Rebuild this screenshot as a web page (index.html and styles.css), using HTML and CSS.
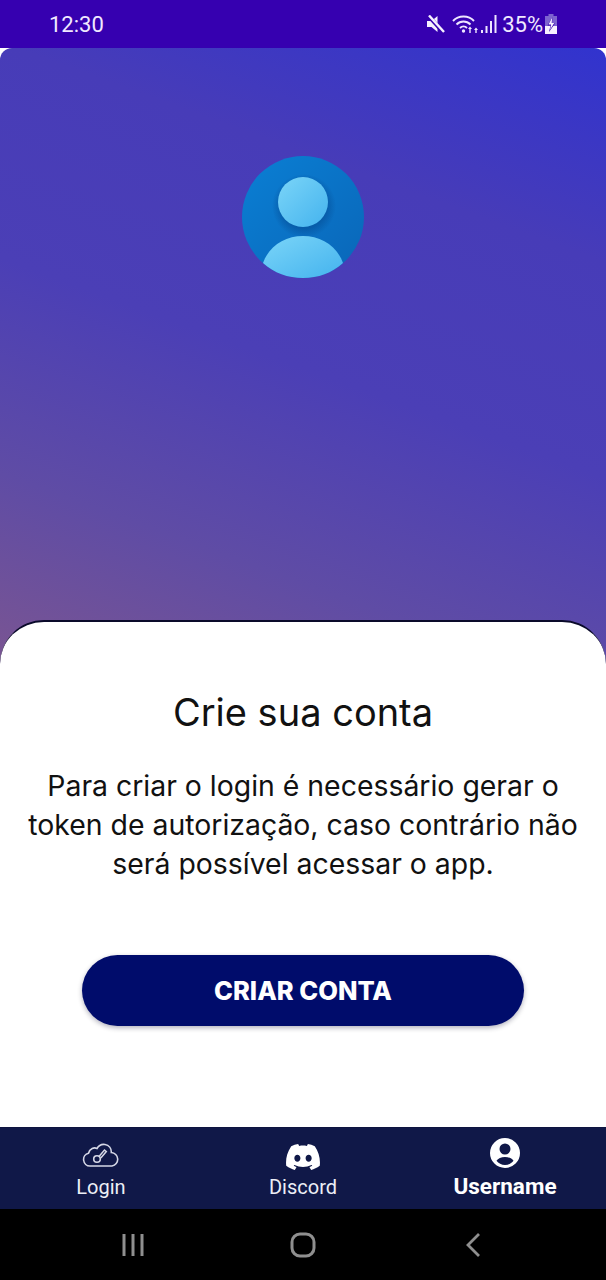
FILE: index.html
```html
<!DOCTYPE html>
<html lang="pt-BR">
<head>
<meta charset="utf-8">
<title>Crie sua conta</title>
<link rel="stylesheet" href="styles.css">
</head>
<body>
<div class="screen">
  <header class="status">
    <span class="clock">12:30</span>
    <div class="status-icons">
      <svg class="i-mute" viewBox="0 0 18 18"><path d="M0 6h4.500L10.500 1v16l-6-5H0z" fill="#f6f0ff"/><path d="M1 0.500l15.500 17" stroke="#3600b0" stroke-width="4"/><path d="M2 0.500l15 16.500" stroke="#f6f0ff" stroke-width="2.400"/></svg>
      <svg class="i-wifi" viewBox="0 0 28 20"><g fill="none" stroke="#eee6ff" stroke-width="1.900"><path d="M1 7C6.500 1 16.500 1 22 7"/><path d="M4.500 10.500c4-4 10-4 14 0"/><path d="M8 14c2-2 5-2 7 0"/></g><circle cx="11.500" cy="17" r="1.700" fill="#eee6ff"/><path d="M16 15l2-2.500 2 2.500h-1.300v4h-1.400v-4zM22 16l2-2.500 2 2.500h-1.300v3h-1.400v-3z" fill="#eee6ff"/></svg>
      <svg class="i-signal" viewBox="0 0 17 20"><path d="M1 16h2v3H1zM5.500 12h2v7h-2zM10 7h2v12h-2zM14.500 1h2v18h-2z" fill="#eee6ff"/></svg>
      <span class="pct">35%</span>
      <svg class="i-batt" viewBox="0 0 14 20"><path d="M4.500 0h5v2H13v18H1V2h3.500z" fill="#7d63cf"/><path d="M1 12h12v8H1z" fill="#f6f0ff"/><path d="M8.500 3L3.500 11.500h3L5 18l6-8.500H8z" fill="#3600b0"/><path d="M8.200 3.500L4.500 10.500h2.600L6 16l4.200-7H7.700z" fill="#f6f0ff"/></svg>
    </div>
  </header>

  <main class="main">
    <section class="hero">
      <svg class="avatar" viewBox="0 0 122 122">
        <defs>
          <linearGradient id="av-bg" x1="0" y1="0" x2="1" y2="1"><stop offset="0" stop-color="#0a7fd4"/><stop offset="1" stop-color="#0a66b8"/></linearGradient>
          <linearGradient id="av-fg" x1="0" y1="0" x2="1" y2="1"><stop offset="0" stop-color="#7bd5f8"/><stop offset="1" stop-color="#44b3ee"/></linearGradient>
          <radialGradient id="av-sh"><stop offset="0.7" stop-color="#04488f" stop-opacity=".5"/><stop offset="1" stop-color="#04488f" stop-opacity="0"/></radialGradient>
        </defs>
        <circle cx="61" cy="61" r="61" fill="url(#av-bg)"/>
        <circle cx="62" cy="50" r="32" fill="url(#av-sh)"/>
        <circle cx="61" cy="46" r="25" fill="url(#av-fg)"/>
        <path d="M21 107C27 90 43 80 61 80s34 10 40 27C90 117 76 122 61 122S32 117 21 107z" fill="url(#av-fg)"/>
      </svg>
    </section>
    <section class="sheet">
      <h1 class="title">Crie sua conta</h1>
      <p class="text">Para criar o login é necessário gerar o token de autorização, caso contrário não será possível acessar o app.</p>
      <button class="cta">CRIAR CONTA</button>
    </section>
  </main>

  <nav class="tabs">
    <div class="tab">
      <svg class="i-cloud" viewBox="0 0 38 24"><path d="M10 23H8a6.500 6.500 0 0 1-1.500-12.800C8 5.500 12 4 15 5.500 17 2 20 1 23 1.500c4 .7 6.500 4 6.300 8A6.800 6.800 0 0 1 30 23z" fill="none" stroke="#d5d7e6" stroke-width="1.600"/><circle cx="15" cy="16" r="3.300" fill="none" stroke="#d5d7e6" stroke-width="1.600"/><path d="M17 13.500L22.500 7l1.800 1.500-5.500 6.500" fill="none" stroke="#d5d7e6" stroke-width="1.500"/></svg>
      <span class="tab-label">Login</span>
    </div>
    <div class="tab">
      <svg class="i-discord" viewBox="0 2.800 24 18.400"><path d="M20.317 4.370a19.790 19.790 0 0 0-4.885-1.515.074.074 0 0 0-.079.037c-.210.375-.444.865-.608 1.250-1.845-.276-3.680-.276-5.487 0-.164-.393-.406-.874-.618-1.250a.077.077 0 0 0-.079-.037 19.740 19.740 0 0 0-4.885 1.515.070.070 0 0 0-.032.028C.533 9.046-.319 13.580.099 18.058a.082.082 0 0 0 .031.056c2.053 1.508 4.041 2.423 5.993 3.029a.078.078 0 0 0 .084-.028c.462-.630.873-1.295 1.226-1.994a.076.076 0 0 0-.042-.106c-.653-.248-1.274-.550-1.872-.892a.077.077 0 0 1-.008-.128c.126-.094.252-.192.372-.291a.074.074 0 0 1 .078-.011c3.928 1.793 8.180 1.793 12.061 0a.074.074 0 0 1 .079.010c.120.099.246.198.373.292a.077.077 0 0 1-.007.128 12.300 12.300 0 0 1-1.873.891.077.077 0 0 0-.041.107c.360.698.772 1.363 1.225 1.993a.076.076 0 0 0 .084.029c1.961-.607 3.950-1.522 6.002-3.029a.077.077 0 0 0 .031-.055c.500-5.177-.838-9.674-3.548-13.660a.061.061 0 0 0-.031-.029zM8.020 15.331c-1.183 0-2.157-1.086-2.157-2.419 0-1.333.956-2.419 2.157-2.419 1.211 0 2.176 1.095 2.157 2.419 0 1.333-.956 2.419-2.157 2.419zm7.975 0c-1.183 0-2.157-1.086-2.157-2.419 0-1.333.955-2.419 2.157-2.419 1.211 0 2.176 1.095 2.157 2.419 0 1.333-.946 2.419-2.157 2.419z" fill="#fff"/></svg>
      <span class="tab-label">Discord</span>
    </div>
    <div class="tab tab-active">
      <svg class="i-user" viewBox="0 0 30 30"><path fill-rule="evenodd" d="M15 0a15 15 0 1 1 0 30a15 15 0 0 1 0-30zM15 5.500a5.500 5.500 0 1 0 0 11a5.500 5.500 0 0 0 0-11zM15 19c-3.800 0-7 1.500-8.500 3.800C8.500 25.300 11.500 27 15 27s6.500-1.700 8.500-4.200C22 20.500 18.800 19 15 19z" fill="#fff"/></svg>
      <span class="tab-label">Username</span>
    </div>
  </nav>

  <footer class="sysnav">
    <svg class="i-recent" viewBox="0 0 24 24"><path d="M3 1v22M12 1v22M21 1v22" stroke="#8f8f8f" stroke-width="3" fill="none"/></svg>
    <svg class="i-home" viewBox="0 0 26 26"><rect x="2" y="2" width="22" height="22" rx="8" stroke="#8f8f8f" stroke-width="3" fill="none"/></svg>
    <svg class="i-back" viewBox="0 0 16 26"><path d="M14 2L3 13l11 11" stroke="#8f8f8f" stroke-width="2.800" fill="none"/></svg>
  </footer>
</div>
</body>
</html>
```

FILE: styles.css
```css
* { box-sizing: border-box; }
html, body { margin: 0; padding: 0; }
body { background: #fff; font-family: "Inter", "Liberation Sans", sans-serif; }
.screen { width: 606px; height: 1280px; display: flex; flex-direction: column; overflow: hidden; }

.status { flex: 0 0 48px; background: #3600b0; color: #f0e9ff; display: flex; align-items: center; justify-content: space-between; padding: 0 48px 0 49px; font-family: "Roboto", sans-serif; }
.clock { font-size: 22px; }
.status-icons { display: flex; align-items: center; }
.i-mute { width: 18px; height: 18px; margin-right: 7px; margin-left: -1px; }
.i-wifi { width: 28px; height: 20px; }
.i-signal { width: 17px; height: 20px; margin-right: 5px; }
.pct { font-size: 22px; margin-right: 1px; }
.i-batt { width: 14px; height: 20px; }

.main { flex: 1; display: flex; flex-direction: column; background: #7d5690 linear-gradient(200deg, #3133ce 0%, #473cb8 25%, #4b3fb6 50%, #5f4ca5 75%, #7d5690 100%) no-repeat; background-size: 100% 640px; border-radius: 12px 12px 0 0; }
.hero { flex: 0 0 572px; padding-top: 108px; display: flex; justify-content: center; align-items: flex-start; }
.avatar { width: 122px; height: 122px; margin-left: -1px; }

.sheet { flex: 1; background: #fff; border-top: 2px solid #0a0a2a; border-radius: 44px 44px 0 0; display: flex; flex-direction: column; align-items: center; color: #111; }
.title { margin: 65px 0 0; font-size: 38px; line-height: 50px; font-weight: 400; }
.text { margin: 29px 0 0; width: 570px; font-size: 28.400px; line-height: 39px; text-align: center; }
.cta { margin-top: 72px; width: 442px; height: 71px; border: 0; border-radius: 36px; background: #000c6b; color: #fff; font-family: inherit; font-weight: 800; font-size: 25.500px; box-shadow: 0 2px 5px rgba(0,0,40,.3); }

.tabs { flex: 0 0 82px; background: #101848; border-top: 1px solid #0e1440; display: grid; grid-template-columns: repeat(3, 1fr); color: #fff; font-family: "Roboto", sans-serif; }
.tab { display: flex; flex-direction: column; align-items: center; justify-content: flex-end; padding-bottom: 10px; }
.tab-active { padding-bottom: 11px; }
.tab-label { font-size: 20px; line-height: 24px; color: #eceef6; margin-top: 6px; }
.tab-active .tab-label { font-size: 22.500px; font-weight: 700; color: #fff; margin-top: 6px; }
.i-cloud { width: 38px; height: 24px; margin-bottom: 2px; }
.i-discord { width: 34px; height: 26px; margin-bottom: -1px; }
.i-user { width: 30px; height: 30px; }

.sysnav { flex: 0 0 71px; background: #000; display: flex; justify-content: center; align-items: center; padding: 0 4px 0 0; }
.sysnav svg { display: block; }
.i-recent { width: 24px; height: 24px; margin-right: 145px; }
.i-home { width: 26px; height: 26px; margin-right: 149px; }
.i-back { width: 16px; height: 26px; }
```
